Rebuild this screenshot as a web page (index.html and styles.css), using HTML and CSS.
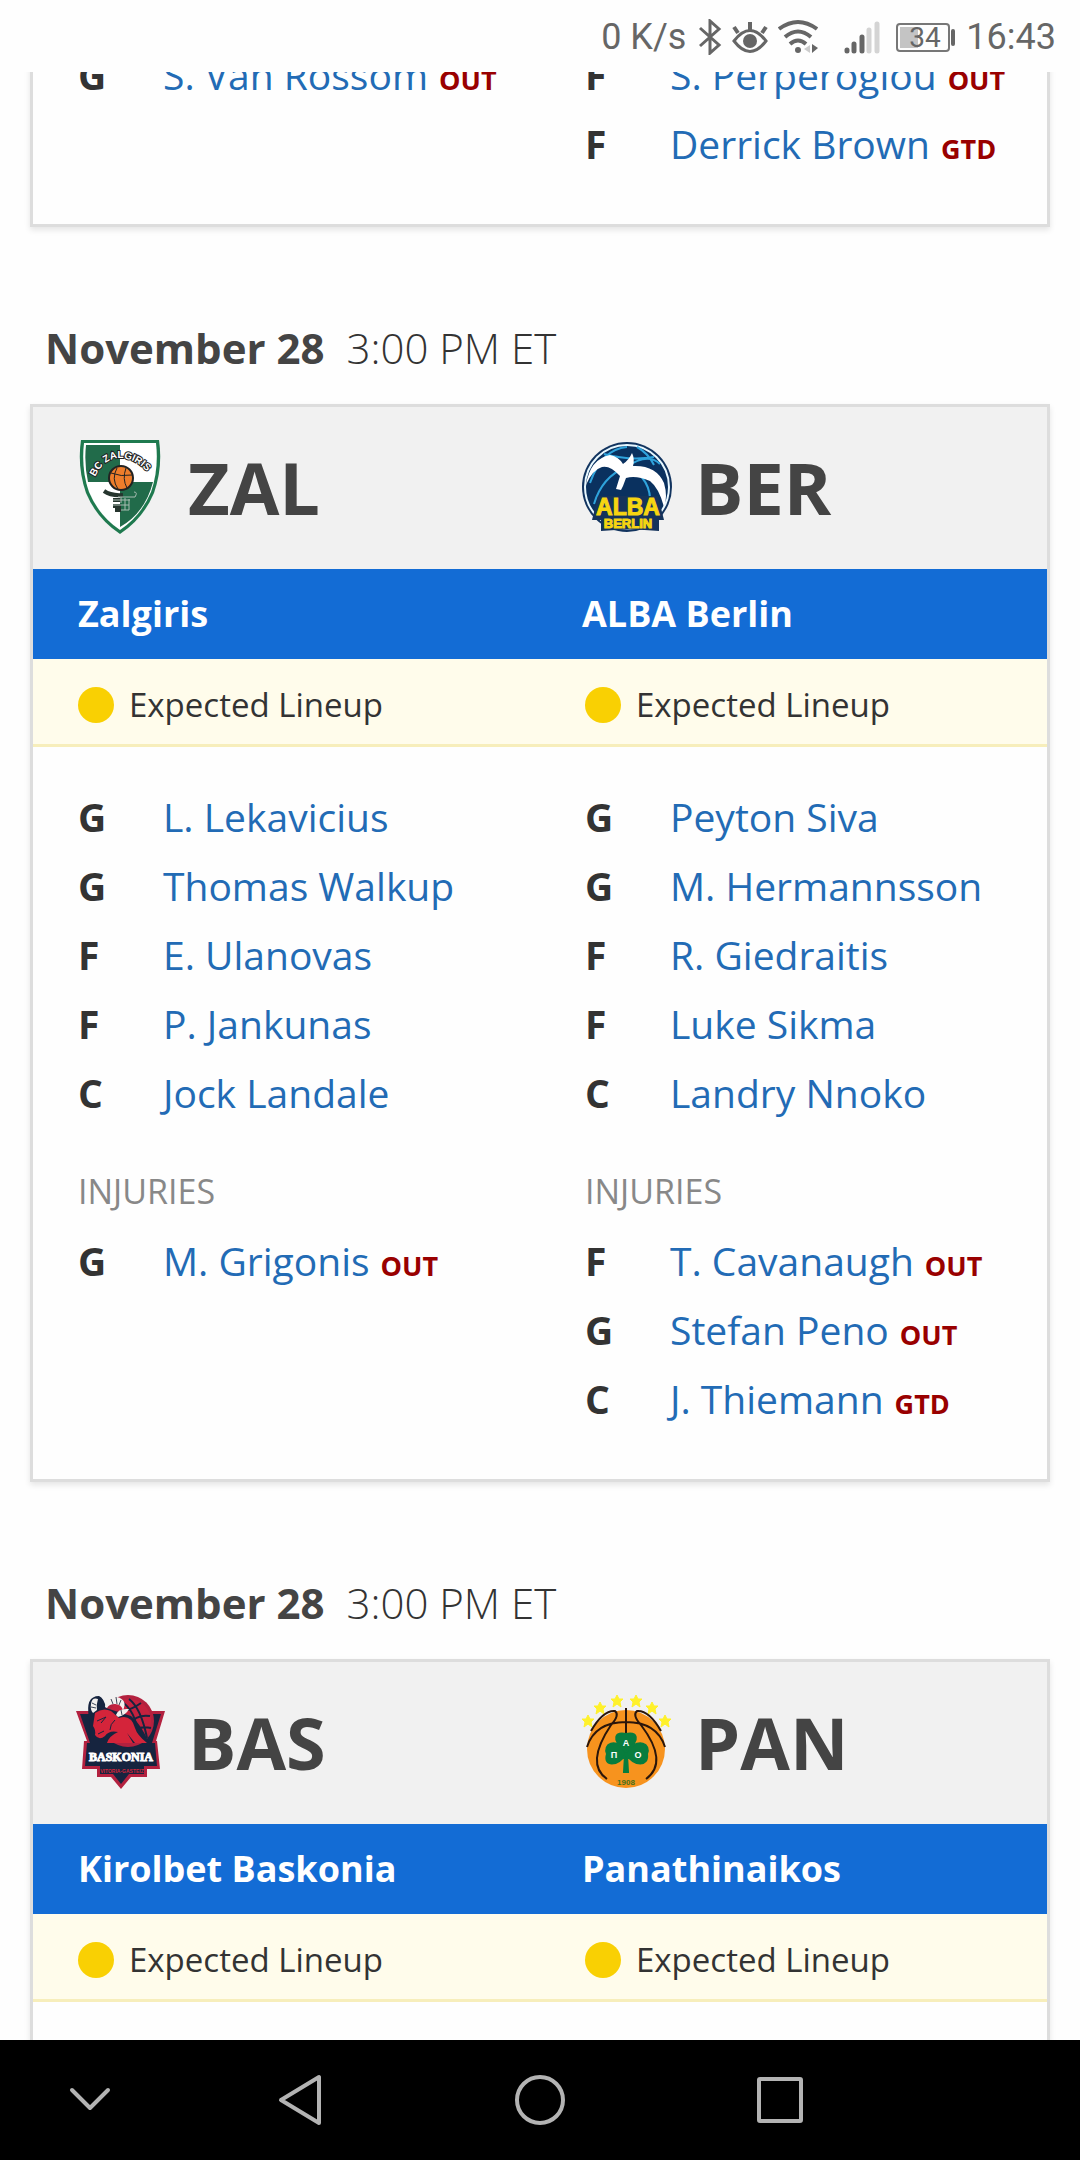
FILE: index.html
```html
<!DOCTYPE html>
<html lang="en">
<head>
<meta charset="utf-8">
<meta name="viewport" content="width=device-width">
<title>Lineups</title>
<link rel="stylesheet" href="styles.css">
</head>
<body>
<header class="status">
  <span>0 K/s</span>
  <svg class="bt" width="24" height="36" viewBox="0 0 24 36"><path d="M2 9L21 26L12 34V2L21 10L2 27" fill="none" stroke="#666" stroke-width="3"/></svg>
  <svg class="eye" width="36" height="36" viewBox="0 0 36 36"><path d="M2 22Q18 1 34 22Q18 43 2 22Z" fill="none" stroke="#666" stroke-width="3"/><circle cx="18" cy="22" r="7" fill="#666"/><path d="M18 11V3M6 14L2 8M30 14L34 8" stroke="#666" stroke-width="4"/></svg>
  <svg class="wifi" width="40" height="36" viewBox="0 0 40 36"><path d="M1 10Q20 -4 39 10M7 18Q20 7 33 18M12 25Q20 18 28 25" fill="none" stroke="#666" stroke-width="4"/><circle cx="20" cy="31" r="3" fill="#666"/><path d="M32 26V34L26 30Z" fill="#ccc"/><path d="M34 25V34L40 29Z" fill="#666"/></svg>
  <svg class="signal" width="36" height="36" viewBox="0 0 36 36"><g stroke-width="5" stroke-linecap="round"><path d="M3 32V31M10 32V25M18 32V18" stroke="#666"/><path d="M25 32V11M33 32V5" stroke="#d4d4d4"/></g></svg>
  <span class="battery"><span class="level">34</span></span>
  <time>16:43</time>
</header>

<main class="page">
  <section class="card cut">
    <div class="cols">
      <div class="col">
        <ul class="players">
          <li><b>G</b><a href="#">S. Van Rossom</a><em>OUT</em></li>
        </ul>
      </div>
      <div class="col">
        <ul class="players">
          <li><b>F</b><a href="#">S. Perperoglou</a><em>OUT</em></li>
          <li><b>F</b><a href="#">Derrick Brown</a><em>GTD</em></li>
        </ul>
      </div>
    </div>
  </section>

  <h2 class="when">November 28 <time>3:00 PM ET</time></h2>
  <section class="card">
    <div class="teams">
      <div class="team">
        <svg class="logo" viewBox="0 0 90 96"><path d="M6 1H84Q88 28 79 54Q68 80 45 95Q22 80 11 54Q2 28 6 1Z" fill="#1f7a4f"/><path d="M9 4H81Q84 30 76 53Q66 77 45 91Q24 77 14 53Q6 30 9 4Z" fill="#fff"/><path d="M11 6H45V43H13Q9 25 11 6ZM45 43H78Q70 74 45 88Z" fill="#216b4a"/><path id="zarc" d="M20 38Q29 19 46 19Q66 21 77 40" fill="none"/><text font-family="Liberation Sans" font-size="10" font-weight="700" fill="#fff" stroke="#222" stroke-width="2" paint-order="stroke"><textPath href="#zarc">BC ZALGIRIS</textPath></text><circle cx="46" cy="39" r="12" fill="#ee7d2b" stroke="#222" stroke-width="2"/><path d="M36 34Q46 38 57 36M42 29Q36 40 43 50M51 29Q47 40 52 49" fill="none" stroke="#222" stroke-width="1"/><path d="M29 52Q36 57 48 56M38 61H46M38 67H46M40 71H46" stroke="#26352e" stroke-width="4" fill="none"/><path d="M43 58H60Q63 53 59 53M38 61H55M38 66H54M46 64V58M50 71V59M54 71V60M46 71H54" stroke="#a9bdb2" stroke-width="1" fill="none"/></svg>
        <h3>ZAL</h3>
      </div>
      <div class="team">
        <svg class="logo" viewBox="0 0 90 96"><circle cx="45" cy="48" r="45" fill="#12345f"/><circle cx="45" cy="48" r="42" fill="#0a315f" stroke="#e8f8ff" stroke-width="2"/><path d="M8 44Q20 10 45 8M12 65Q20 38 44 28Q66 13 78 25M46 28Q70 40 68 66M22 15Q48 22 72 18M55 8Q66 14 72 26" fill="none" stroke="#2fa3dc" stroke-width="2"/><path d="M4 46Q8 20 28 16Q37 18 41 25Q47 21 50 14Q53 20 51 27Q74 26 82 44Q86 58 82 68Q77 49 68 42Q54 36 44 39L41 47L39 51L34 50L38 37Q28 26 20 28Q10 31 4 46Z" fill="#fff"/><path d="M16 57H76L82 81H77V92Q48 89 19 92V81H10Z" fill="#15335b"/><text x="46" y="76" text-anchor="middle" font-family="Liberation Sans" font-size="23" font-weight="700" fill="#f6d511" stroke="#f6d511" stroke-width="1">ALBA</text><text x="46" y="89" text-anchor="middle" font-family="Liberation Sans" font-size="13" font-weight="700" fill="#f6d511" stroke="#f6d511">BERLIN</text></svg>
        <h3>BER</h3>
      </div>
    </div>
    <div class="names"><span>Zalgiris</span><span>ALBA Berlin</span></div>
    <div class="state"><span>Expected Lineup</span><span>Expected Lineup</span></div>
    <div class="cols body">
      <div class="col">
        <ul class="players">
          <li><b>G</b><a href="#">L. Lekavicius</a></li>
          <li><b>G</b><a href="#">Thomas Walkup</a></li>
          <li><b>F</b><a href="#">E. Ulanovas</a></li>
          <li><b>F</b><a href="#">P. Jankunas</a></li>
          <li><b>C</b><a href="#">Jock Landale</a></li>
        </ul>
        <h4>INJURIES</h4>
        <ul class="players">
          <li><b>G</b><a href="#">M. Grigonis</a><em>OUT</em></li>
        </ul>
      </div>
      <div class="col">
        <ul class="players">
          <li><b>G</b><a href="#">Peyton Siva</a></li>
          <li><b>G</b><a href="#">M. Hermannsson</a></li>
          <li><b>F</b><a href="#">R. Giedraitis</a></li>
          <li><b>F</b><a href="#">Luke Sikma</a></li>
          <li><b>C</b><a href="#">Landry Nnoko</a></li>
        </ul>
        <h4>INJURIES</h4>
        <ul class="players">
          <li><b>F</b><a href="#">T. Cavanaugh</a><em>OUT</em></li>
          <li><b>G</b><a href="#">Stefan Peno</a><em>OUT</em></li>
          <li><b>C</b><a href="#">J. Thiemann</a><em>GTD</em></li>
        </ul>
      </div>
    </div>
  </section>

  <h2 class="when">November 28 <time>3:00 PM ET</time></h2>
  <section class="card last">
    <div class="teams">
      <div class="team">
        <svg class="logo" viewBox="0 0 90 96"><path d="M1 17H90L81 47H82L85 75H72V83H56L46 95L36 83H22V75H7L9 47H12Z" fill="#b3213f"/><path d="M5 20H86L77 49H80L82 72H69V80H54L46 90L38 80H25V72H10L12 49H15Z" fill="#16243f"/><circle cx="53" cy="27" r="26" fill="#b3213f"/><circle cx="54" cy="27" r="22" fill="#c4213e"/><path d="M54 5Q66 14 72 44M66 9Q56 16 50 16M75 22Q62 20 54 30M76 34Q66 32 60 36M45 6Q62 18 62 40" fill="none" stroke="#16243f" stroke-width="2"/><path d="M14 24Q10 2 24 2Q29 4 31 14L56 22Q66 30 74 49H16Z" fill="#16243f"/><path d="M20 19Q28 13 36 17L44 24Q56 20 60 34Q62 41 72 49H60L52 39L58 49H32Q34 42 43 38Q34 36 30 42Q24 47 20 41Q21 36 18 32Z" fill="#d4243a"/><path d="M22 27L31 23L26 29M23 40L29 37M40 26Q35 30 35 36" stroke="#16243f" stroke-width="1" fill="none"/><path d="M30 13Q31 2 42 3Q53 6 48 16Q46 10 40 10Q34 10 32 14ZM16 10Q17 3 23 5Q21 11 22 16L18 19Q15 16 16 10ZM41 21Q43 14 54 15Q51 21 43 23Z" fill="#f3f0ee"/><path d="M36 5L38 10M41 3L42 10M46 6L44 11M17 9L21 11M16 13L21 14M46 16L47 21" stroke="#3b4557" stroke-width="1"/><text x="46" y="67" text-anchor="middle" font-family="Liberation Serif" font-size="12" font-weight="700" fill="#fff" stroke="#fff">BASKONIA</text><text x="47" y="79" text-anchor="middle" font-family="Liberation Sans" font-size="5" font-weight="700" fill="#d4243a">VITORIA-GASTEIZ</text></svg>
        <h3>BAS</h3>
      </div>
      <div class="team">
        <svg class="logo" viewBox="0 0 90 96"><defs><path id="star" d="M0 -6L2 -2L6 -2L3 1L4 6L0 3L-4 6L-3 1L-6 -2L-2 -2Z" fill="#fff12b" stroke="#fff12b"/></defs><use href="#star" x="6" y="27"/><use href="#star" x="18" y="14"/><use href="#star" x="35" y="7"/><use href="#star" x="54" y="7"/><use href="#star" x="70" y="14"/><use href="#star" x="83" y="27"/><circle cx="44" cy="55" r="39" fill="#f7931e"/><path d="M44 14V42M5 53Q13 28 44 28Q75 28 83 53M9 37Q21 16 33 17Q38 21 29 31Q3 70 25 85M79 37Q67 16 55 17Q50 21 59 31Q87 68 64 85" fill="none" stroke="#2b160b" stroke-width="2"/><path d="M44 58C28 44 34 38 44 40C54 38 60 44 44 58C57 43 69 50 65 60C67 73 52 72 45 61L46 78H42L43 61C36 72 21 73 25 60C21 50 33 43 44 58Z" fill="#087d3e" stroke="#087d3e" stroke-width="2"/><g font-family="Liberation Sans" font-weight="700" font-size="9" fill="#fff" text-anchor="middle"><text x="44" y="52">A</text><text x="32" y="64">Π</text><text x="56" y="64">O</text></g><text x="44" y="91" text-anchor="middle" font-family="Liberation Sans" font-size="8" font-weight="700" fill="#44701f">1908</text></svg>
        <h3>PAN</h3>
      </div>
    </div>
    <div class="names"><span>Kirolbet Baskonia</span><span>Panathinaikos</span></div>
    <div class="state"><span>Expected Lineup</span><span>Expected Lineup</span></div>
  </section>
</main>

<nav class="keys">
  <button aria-label="Hide"><svg width="52" height="52" viewBox="0 0 52 52"><path d="M8 16L26 34L44 16"/></svg></button>
  <button aria-label="Back"><svg width="52" height="52" viewBox="0 0 52 52"><path d="M45 3V49L7 26Z"/></svg></button>
  <button aria-label="Home"><svg width="52" height="52" viewBox="0 0 52 52"><circle cx="26" cy="26" r="23"/></svg></button>
  <button aria-label="Recent apps"><svg width="52" height="52" viewBox="0 0 52 52"><rect x="5" y="5" width="42" height="42" rx="1"/></svg></button>
</nav>
</body>
</html>
```
FILE: styles.css
```css
* {
  box-sizing: border-box;
}

body {
  margin: 0;
  height: 100vh;
  display: flex;
  flex-direction: column;
  background: #fefefe;
  color: #333;
  font-family: "Open Sans", sans-serif;
}

h2, h3, h4, ul {
  margin: 0;
  padding: 0;
}

.status {
  flex: none;
  height: 72px;
  padding: 2px 24px 0;
  display: flex;
  align-items: center;
  justify-content: flex-end;
  color: #666;
  font: 36px/42px Roboto, sans-serif;
}

.bt {
  margin: 0 10px 0 12px;
}

.wifi {
  margin: 0 26px 0 10px;
}

.battery {
  position: relative;
  width: 54px;
  height: 29px;
  margin: 0 16px 0 16px;
  padding: 2px;
  border: 2px solid #777;
  border-radius: 4px;
  font-size: 28px;
  line-height: 22px;
}

.battery::after {
  content: "";
  position: absolute;
  left: 53px;
  top: 4px;
  width: 4px;
  height: 17px;
  border-radius: 2px;
  background: #666;
}

.level {
  display: block;
  height: 100%;
  padding-left: 9px;
  background: linear-gradient(to right, #c4c4c4 40%, transparent 40%);
}

.page {
  flex: 1;
  min-height: 0;
  overflow: hidden;
  padding: 0 30px;
}

.card {
  border: 3px solid #ddd;
  box-shadow: 0 3px 6px rgba(0, 0, 0, 0.1);
}

.cut {
  margin-top: -35px;
  padding-bottom: 46px;
}

.last {
  min-height: 1000px;
}

.when {
  padding: 92px 15px 28px;
  color: #444;
  font-size: 42px;
  line-height: 57px;
}

.when time {
  margin-left: 11px;
  font-weight: 300;
  color: #333;
}

.teams, .names, .state, .cols {
  display: grid;
  grid-template-columns: 1fr 1fr;
}

.teams {
  height: 162px;
  padding-bottom: 2px;
  align-items: center;
  background: #f1f1f1;
}

.team {
  display: flex;
  align-items: center;
  gap: 23px;
  padding-left: 42px;
}

.logo {
  width: 90px;
  height: 96px;
}

h3 {
  color: #444;
  font-size: 72px;
  line-height: 96px;
}

.names {
  background: #136cd5;
  color: #fff;
  font-size: 36px;
  font-weight: 700;
  line-height: 90px;
}

.names span {
  padding-left: 45px;
}

.names span + span {
  padding-left: 42px;
}

.state {
  padding-top: 6px;
  border-bottom: 3px solid #f7eebb;
  background: #fffceb;
  font-size: 33px;
  line-height: 79px;
}

.state span {
  display: flex;
  align-items: center;
  gap: 15px;
  padding-left: 45px;
}

.state span::before {
  content: "";
  width: 36px;
  height: 36px;
  border-radius: 50%;
  background: #f9d003;
}

.body {
  padding: 35px 0 46px;
}

.col {
  padding-left: 45px;
}

.players {
  list-style: none;
  font-size: 39px;
  line-height: 69px;
}

.players li {
  display: flex;
  align-items: baseline;
  height: 69px;
  white-space: nowrap;
}

.players b {
  width: 85px;
}

.players a {
  color: #226bb5;
  text-decoration: none;
}

.players em {
  margin-left: 11px;
  color: #900;
  font-size: 27px;
  font-style: normal;
  font-weight: 700;
}

h4 {
  margin-top: 30px;
  color: #888;
  font-size: 34px;
  font-weight: 400;
  line-height: 69px;
}

.keys {
  flex: none;
  height: 120px;
  display: grid;
  grid-template-columns: 3fr 4fr 4fr 4fr 3fr;
  background: #000;
}

.keys button {
  display: flex;
  align-items: center;
  justify-content: center;
  border: 0;
  padding: 0;
  background: none;
}

.keys svg {
  fill: none;
  stroke: #b3b3b3;
  stroke-width: 4;
  stroke-linejoin: round;
  stroke-linecap: round;
}
```
